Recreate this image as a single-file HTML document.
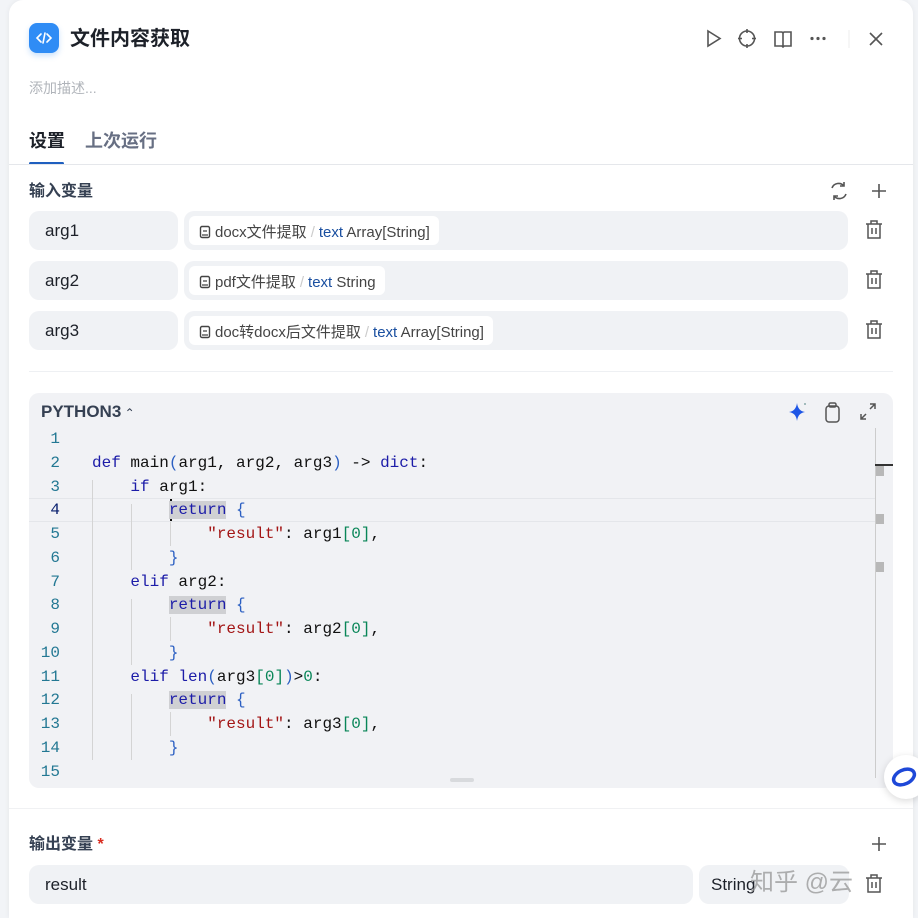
<!DOCTYPE html>
<html><head><meta charset="utf-8"><style>
*{margin:0;padding:0;box-sizing:border-box}
body{width:918px;height:918px;overflow:hidden;background:#f2f4f7;font-family:"Liberation Sans","Noto Sans CJK SC",sans-serif;position:relative}
.card{position:absolute;left:9px;top:0;width:904px;height:918px;background:#fff;border-radius:14px 14px 0 0;box-shadow:0 0 6px rgba(0,0,0,.06)}
.a{position:absolute}
.t{color:#1d2129}
.row{position:absolute;left:29px;height:39px;width:149px;background:#f0f2f5;border-radius:10px;font-size:17px;color:#1d2129;padding:10px 0 0 16px}
.sel{position:absolute;left:184px;width:664px;height:39px;background:#f0f2f5;border-radius:10px}
.chip{position:absolute;left:5px;top:5px;height:29px;background:#fff;border-radius:6px;padding:5px 9px 0 10px;font-size:15px;color:#444;white-space:nowrap}
.chip svg{vertical-align:-2px;margin-right:4px}
.chip .s{color:#ccc;margin:0 4px}
.chip .b{color:#1a4fa0}
.code{position:absolute;left:29px;top:393px;width:864px;height:395px;background:#f1f2f5;border-radius:10px}
.ln{position:absolute;left:30px;width:30px;text-align:right;font:16px "Liberation Mono",monospace;color:#237893}
.cl{position:absolute;left:92px;font:16px "Liberation Mono",monospace;color:#111;white-space:pre}
.k{color:#1c1ca8}.p{color:#2b5fc2}.s2{color:#a31515}.n{color:#098658}
.hl{background:#cfd0d3}
</style></head><body>
<div class="card"></div>
<div class="a" style="left:29px;top:23px;width:30px;height:30px;background:#2f8cf5;border-radius:8px;box-shadow:0 3px 6px rgba(47,140,245,.25)">
<svg width="30" height="30" viewBox="0 0 30 30"><path d="M12 11l-4 4 4 4M18 11l4 4-4 4M16 10l-2 10" stroke="#fff" stroke-width="1.6" fill="none" stroke-linecap="round"/></svg></div>
<div class="a t" style="left:70px;top:22px;font-size:20px;font-weight:bold">文件内容获取</div>
<svg class="a" style="left:700px;top:26px" width="200" height="26" viewBox="0 0 200 26">
<g stroke="#555" stroke-width="1.6" fill="none">
<path d="M8 5l12 7.5-12 7.5z"/>
<circle cx="47" cy="12.5" r="7.5"/><path d="M47 3v4M47 18v4M38 12.5h4M52 12.5h4"/>
<path d="M75 6h7l1 1 1-1h7v14h-7l-1 1-1-1h-7zM83 7v13"/>
<path d="M170 7l12 12M182 7l-12 12"/>
</g>
<g fill="#555"><circle cx="112" cy="12.5" r="1.6"/><circle cx="118" cy="12.5" r="1.6"/><circle cx="124" cy="12.5" r="1.6"/></g>
<path d="M149 4v18" stroke="#eee"/>
</svg>
<div class="a" style="left:29px;top:78px;font-size:14px;color:#b0b4ba">添加描述...</div>
<div class="a t" style="left:29px;top:127px;font-size:18px;font-weight:bold">设置</div>
<div class="a" style="left:85px;top:127px;font-size:18px;font-weight:bold;color:#676f83">上次运行</div>
<div class="a" style="left:29px;top:162px;width:35px;height:3px;background:#1f5fbf;border-radius:2px"></div>
<div class="a" style="left:9px;top:164px;width:904px;height:1px;background:#e5e7eb"></div>
<div class="a" style="left:29px;top:177px;font-size:16px;font-weight:bold;color:#354052">输入变量</div>
<svg class="a" style="left:826px;top:178px" width="70" height="26" viewBox="0 0 70 26">
<g stroke="#555" stroke-width="1.6" fill="none"><path d="M6 10a7 7 0 0 1 12-2M20 16a7 7 0 0 1-12 2"/><path d="M18 4v4h-4M8 22v-4h4"/><path d="M53 6v14M46 13h14"/></g></svg>
<div class="row" style="top:211px">arg1</div>
<div class="row" style="top:261px">arg2</div>
<div class="row" style="top:311px">arg3</div>
<div class="sel" style="top:211px"><div class="chip"><svg width="12" height="14"><rect x="1.5" y="1.5" width="9" height="11" rx="1.5" stroke="#444" stroke-width="1.4" fill="none"/><path d="M4 6h4M3 10h6" stroke="#444" stroke-width="1.2"/></svg>docx文件提取<span class="s">/</span><span class="b">text</span> Array[String]</div></div>
<div class="sel" style="top:261px"><div class="chip"><svg width="12" height="14"><rect x="1.5" y="1.5" width="9" height="11" rx="1.5" stroke="#444" stroke-width="1.4" fill="none"/><path d="M4 6h4M3 10h6" stroke="#444" stroke-width="1.2"/></svg>pdf文件提取<span class="s">/</span><span class="b">text</span> String</div></div>
<div class="sel" style="top:311px"><div class="chip"><svg width="12" height="14"><rect x="1.5" y="1.5" width="9" height="11" rx="1.5" stroke="#444" stroke-width="1.4" fill="none"/><path d="M4 6h4M3 10h6" stroke="#444" stroke-width="1.2"/></svg>doc转docx后文件提取<span class="s">/</span><span class="b">text</span> Array[String]</div></div>
<svg class="a" style="left:862px;top:218px" width="24" height="130" viewBox="0 0 24 130">
<g stroke="#555" stroke-width="1.5" fill="none">
<path d="M4 6h16M9 6V3h6v3M6 6v14h12V6M10 10v6M14 10v6"/>
<path transform="translate(0,50)" d="M4 6h16M9 6V3h6v3M6 6v14h12V6M10 10v6M14 10v6"/>
<path transform="translate(0,100)" d="M4 6h16M9 6V3h6v3M6 6v14h12V6M10 10v6M14 10v6"/>
</g></svg>
<div class="a" style="left:29px;top:371px;width:864px;height:1px;background:#eef0f3"></div>
<div class="code"></div>
<div class="a" style="left:41px;top:402px;font-size:17px;font-weight:bold;color:#354052">PYTHON3<span style="font-size:12px;font-weight:normal"> ⌃</span></div>
<svg class="a" style="left:785px;top:400px" width="100" height="24" viewBox="0 0 100 24">
<path d="M12 3q1 8 8 9q-7 1-8 9q-1-8-8-9q7-1 8-9z" fill="#1e56e6"/><circle cx="20" cy="4" r="1" fill="#8aa"/>
<g stroke="#555" stroke-width="1.5" fill="none"><rect x="41" y="6" width="13" height="16" rx="3"/><rect x="44" y="3" width="7" height="4" rx="1.5"/>
<path d="M76 19l5-5M76 14v5h5M90 4l-5 5M90 9V4h-5"/></g></svg>
<div class="a" style="left:29px;top:498px;width:846px;height:24px;border-top:1px solid #e4e6ea;border-bottom:1px solid #e4e6ea"></div>
<div class="a" style="left:875px;top:428px;width:1px;height:350px;background:#ccc"></div>
<div class="a" style="left:875px;top:464px;width:18px;height:2px;background:#333"></div>
<div class="a" style="left:876px;top:466px;width:8px;height:10px;background:#b8b8b8"></div>
<div class="a" style="left:876px;top:514px;width:8px;height:10px;background:#b8b8b8"></div>
<div class="a" style="left:876px;top:562px;width:8px;height:10px;background:#b8b8b8"></div>
<div class="a" style="left:450px;top:778px;width:24px;height:4px;background:#d8dadd;border-radius:2px"></div>
<div class="a" style="left:92px;top:480px;width:1px;height:280px;background:#d4d4d4"></div>
<div class="a" style="left:131px;top:504px;width:1px;height:66px;background:#d4d4d4"></div>
<div class="a" style="left:131px;top:599px;width:1px;height:66px;background:#d4d4d4"></div>
<div class="a" style="left:131px;top:694px;width:1px;height:66px;background:#d4d4d4"></div>
<div class="a" style="left:170px;top:522px;width:1px;height:24px;background:#d4d4d4"></div>
<div class="a" style="left:170px;top:617px;width:1px;height:24px;background:#d4d4d4"></div>
<div class="a" style="left:170px;top:712px;width:1px;height:24px;background:#d4d4d4"></div>
<div class="a" style="left:170px;top:499px;width:2px;height:22px;background:#111"></div>
<div class="ln" style="top:430px">1</div><div class="ln" style="top:454px">2</div><div class="ln" style="top:478px">3</div><div class="ln" style="top:501px;color:#0b216f">4</div><div class="ln" style="top:525px">5</div><div class="ln" style="top:549px">6</div><div class="ln" style="top:573px">7</div><div class="ln" style="top:596px">8</div><div class="ln" style="top:620px">9</div><div class="ln" style="top:644px">10</div><div class="ln" style="top:668px">11</div><div class="ln" style="top:691px">12</div><div class="ln" style="top:715px">13</div><div class="ln" style="top:739px">14</div><div class="ln" style="top:763px">15</div>
<div class="cl" style="top:454px"><span class="k">def</span> main<span class="p">(</span>arg1, arg2, arg3<span class="p">)</span> -&gt; <span class="k">dict</span>:</div>
<div class="cl" style="top:478px">    <span class="k">if</span> arg1:</div>
<div class="cl" style="top:501px">        <span class="k hl">return</span> <span class="p">{</span></div>
<div class="cl" style="top:525px">            <span class="s2">"result"</span>: arg1<span class="n">[0]</span>,</div>
<div class="cl" style="top:549px">        <span class="p">}</span></div>
<div class="cl" style="top:573px">    <span class="k">elif</span> arg2:</div>
<div class="cl" style="top:596px">        <span class="k hl">return</span> <span class="p">{</span></div>
<div class="cl" style="top:620px">            <span class="s2">"result"</span>: arg2<span class="n">[0]</span>,</div>
<div class="cl" style="top:644px">        <span class="p">}</span></div>
<div class="cl" style="top:668px">    <span class="k">elif</span> <span class="k">len</span><span class="p">(</span>arg3<span class="n">[0]</span><span class="p">)</span>&gt;<span class="n">0</span>:</div>
<div class="cl" style="top:691px">        <span class="k hl">return</span> <span class="p">{</span></div>
<div class="cl" style="top:715px">            <span class="s2">"result"</span>: arg3<span class="n">[0]</span>,</div>
<div class="cl" style="top:739px">        <span class="p">}</span></div>
<div class="a" style="left:9px;top:808px;width:904px;height:1px;background:#f0f1f3"></div>
<div class="a" style="left:29px;top:830px;font-size:16px;font-weight:bold;color:#354052">输出变量 <span style="color:#d92d20">*</span></div>
<svg class="a" style="left:868px;top:833px" width="22" height="22"><path d="M11 4v14M4 11h14" stroke="#555" stroke-width="1.6"/></svg>
<div class="a" style="left:29px;top:865px;width:664px;height:39px;background:#f0f2f5;border-radius:10px;font-size:17px;color:#1d2129;padding:10px 0 0 16px">result</div>
<div class="a" style="left:699px;top:865px;width:150px;height:39px;background:#f0f2f5;border-radius:10px;font-size:17px;color:#1d2129;padding:10px 0 0 12px">String</div>
<div class="a" style="left:750px;top:862px;font-size:24px;color:rgba(150,150,150,.75)">知乎 @云</div>
<svg class="a" style="left:862px;top:872px" width="24" height="24"><g stroke="#555" stroke-width="1.5" fill="none"><path d="M4 6h16M9 6V3h6v3M6 6v14h12V6M10 10v6M14 10v6"/></g></svg>
<div class="a" style="left:884px;top:755px;width:44px;height:44px;border-radius:50%;background:#fff;box-shadow:0 2px 8px rgba(0,0,0,.15)"></div>
<svg class="a" style="left:889px;top:762px" width="30" height="30"><ellipse cx="15" cy="15" rx="11" ry="7" transform="rotate(-25 15 15)" stroke="#1e48d8" stroke-width="3.5" fill="none"/></svg>
</body></html>
